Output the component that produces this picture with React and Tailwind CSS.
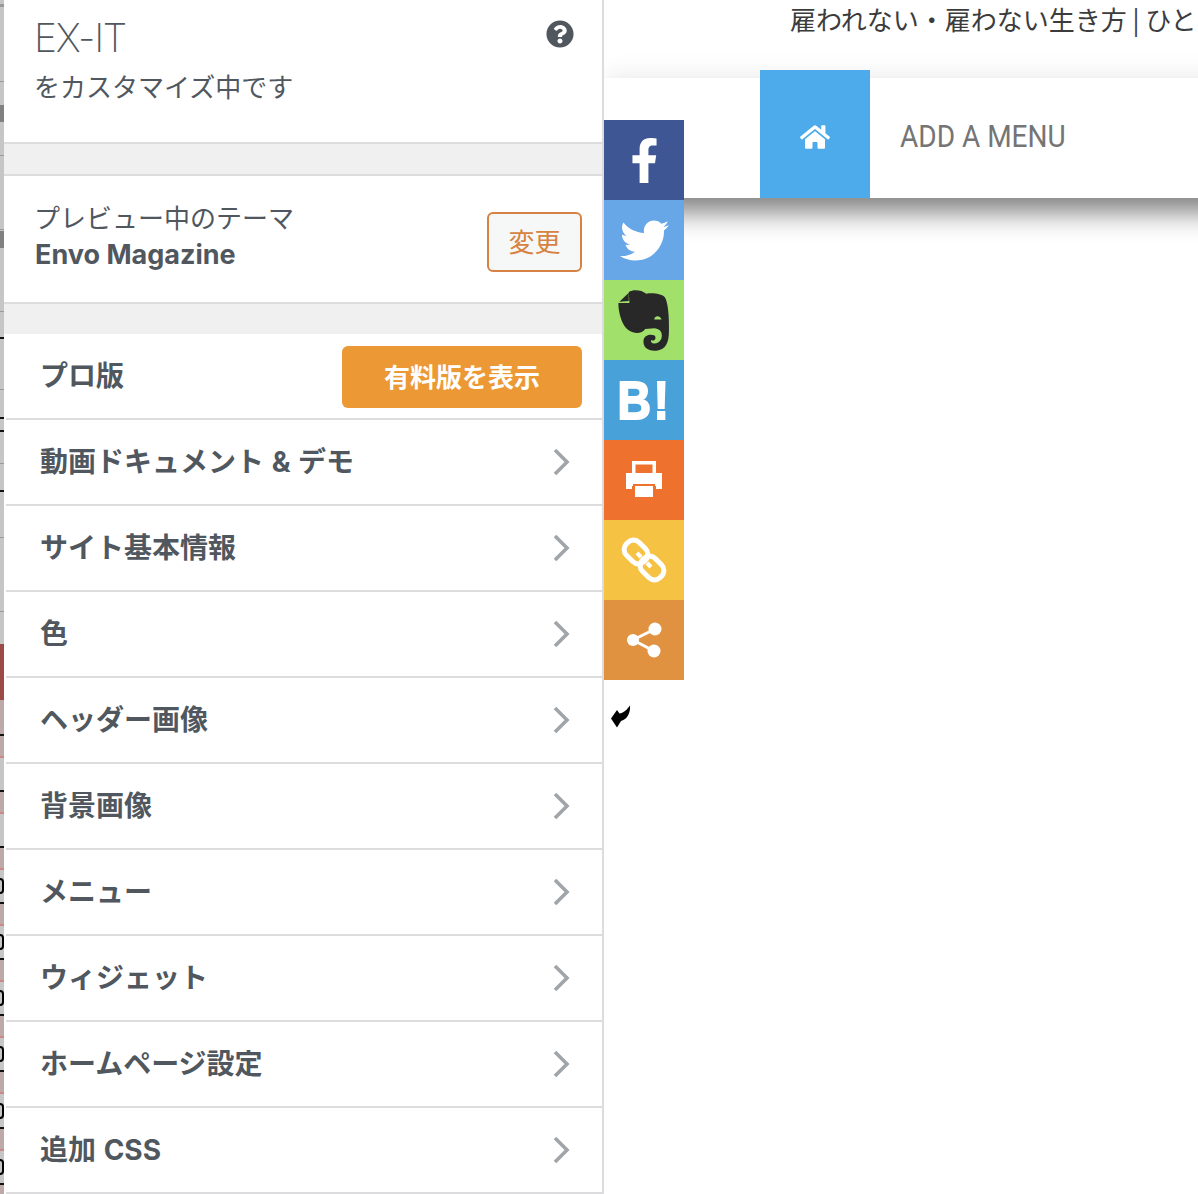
import React from "react";
import { FaFacebookF, FaTwitter, FaHome, FaQuestionCircle } from "react-icons/fa";

const jp = { fontFamily: '"Noto Sans CJK JP", sans-serif' };

function Chevron() {
  return (
    <svg width="18" height="28" viewBox="0 0 18 28" className="shrink-0">
      <polyline points="3,2 15,14 3,26" fill="none" stroke="#a0a5aa" strokeWidth="3.6" />
    </svg>
  );
}

function Row({ label }) {
  return (
    <div className="h-[86px] border-b-2 border-[#dcdcde] flex items-center justify-between pl-[34px] pr-8 ml-[2px]">
      <span className="text-[28px] font-bold text-[#50575e] leading-none [word-spacing:1px] font-['Inter','Noto_Sans_CJK_JP',sans-serif]">{label}</span>
      <Chevron />
    </div>
  );
}

const rows = ["動画ドキュメント & デモ", "サイト基本情報", "色", "ヘッダー画像", "背景画像", "メニュー", "ウィジェット", "ホームページ設定", "追加 CSS"];

function ElephantIcon() {
  return (
    <svg width="57" height="67" viewBox="50 20 170 200">
      <path
        fill="#282828"
        d="M88 35C100 27 125 27 140 40C160 37 185 40 195 50C205 62 209 110 208 150C208 185 200 207 170 210C145 212 130 200 132 180C133 165 150 158 165 165C172 172 165 185 155 178C150 190 175 195 185 175C190 160 185 145 165 143L137 145C130 156 115 160 100 155C80 150 70 130 65 115C60 100 57 85 57 68L90 68Z"
      />
      <path fill="#282828" d="M60 64L88 37V62Z" />
      <path fill="#a2e06c" d="M164 117C166 105 180 104 186 117Z" />
    </svg>
  );
}

function PrintIcon() {
  return (
    <svg width="40" height="40" viewBox="0 0 40 40">
      <path fillRule="evenodd" d="M8 1H32V13H38V29H32V26H8V29H2V13H8ZM11.5 4.5V13H28.5V4.5Z" fill="#fff" />
      <rect x="10" y="25" width="20" height="13" fill="#fff" stroke="#ee722e" strokeWidth="2" />
    </svg>
  );
}

function LinkIcon() {
  return (
    <svg width="46" height="46" viewBox="0 0 46 46" fill="none" stroke="#fff">
      <rect x="2.5" y="6" width="25" height="18" rx="8" strokeWidth="5" transform="rotate(45 15 15)" />
      <rect x="18.5" y="22" width="25" height="18" rx="8" strokeWidth="5" transform="rotate(45 31 31)" />
      <path d="M16 16L20 20M26 26L30 30" strokeWidth="4" />
    </svg>
  );
}

function ShareIcon() {
  return (
    <svg width="36" height="36" viewBox="0 0 36 36" fill="#fff">
      <path d="M29 7L7 18L28 29" fill="none" stroke="#fff" strokeWidth="3" />
      <circle cx="29" cy="7" r="6.5" />
      <circle cx="7" cy="18" r="6" />
      <circle cx="28" cy="29" r="6.5" />
    </svg>
  );
}

const shares = [
  ["bg-[#3f5695]", <FaFacebookF size={45} color="#fff" />],
  ["bg-[#67a7e8]", <FaTwitter size={49} color="#fff" />],
  ["bg-[#a2e06c]", <ElephantIcon />],
  ["bg-[#49a1da]", <span className="text-[54px] font-bold text-white leading-none tracking-[3px] scale-x-[0.86] [-webkit-text-stroke:2px_white] font-['Liberation_Sans',sans-serif]">B!</span>],
  ["bg-[#ee722e]", <PrintIcon />],
  ["bg-[#f6c244]", <LinkIcon />],
  ["bg-[#e09240]", <ShareIcon />],
];

const GRAY = "#c6c6c6";
const PINK = "#bda9a7";
const LINE = "#9a9a9a";

function stripSegments() {
  const segs = [];
  let y = 0;
  const fill = (to, color) => {
    if (to > y) segs.push({ h: to - y, color });
    y = Math.max(y, to);
  };
  const mark = (at, h, color) => {
    fill(at, GRAY);
    segs.push({ h, color });
    y = at + h;
  };
  [[4, 3, LINE], [81, 1, LINE], [105, 17, "#808080"], [155, 1, LINE], [229, 1, LINE], [231, 17, "#808080"], [311, 1, LINE], [337, 2, "#111"], [389, 1, LINE], [417, 2, "#111"], [430, 2, "#111"], [463, 1, LINE], [490, 2, "#111"], [537, 1, LINE], [611, 1, LINE]].forEach(([a, h, c]) => mark(a, h, c));
  fill(644, GRAY);
  segs.push({ h: 56, color: "#9c4a45" });
  y = 700;
  fill(734, PINK);
  const ticks = [734, 790, 846, 902, 958, 1014, 1070, 1127, 1183];
  ticks.forEach((t, i) => {
    fill(t, i === 0 ? PINK : GRAY);
    segs.push({ h: 2, color: "#111" });
    y = t + 2;
    const next = ticks[i + 1];
    fill(t + 22, PINK);
    segs.push({ h: 2, color: "#c98a86" });
    y = t + 24;
    if (next && next >= 902) {
      fill(next - 24, GRAY);
      segs.push({ h: 16, color: GRAY, glyph: true });
      y = next - 8;
    }
  });
  fill(1194, GRAY);
  return segs;
}

export default function App() {
  return (
    <div className="w-[1198px] h-[1194px] overflow-hidden flex bg-white relative" style={jp}>
      <div className="w-[4px] shrink-0 h-[1194px] overflow-hidden">
        {stripSegments().map((s, i) => (
          <div key={i} style={{ height: s.h, backgroundColor: s.color }}>
            {s.glyph && <div className="w-[4px] h-[16px] border-[2px] border-l-0 border-black rounded-r-full"></div>}
          </div>
        ))}
      </div>
      <aside className="relative z-10 w-[600px] shrink-0 bg-white border-r-2 border-[#dcdcde] h-[1194px]">
        <div className="h-[142px] pl-[31px] pr-[28px] flex justify-between">
          <div>
            <div className="pt-[15px] -ml-[1px] text-[39px] leading-[46px] font-extralight text-[#50575e] tracking-[-1.3px] font-['Inter',sans-serif]">EX-IT</div>
            <div className="mt-[5px] -ml-[1px] text-[26px] leading-[40px] text-[#50575e]">をカスタマイズ中です</div>
          </div>
          <FaQuestionCircle size={28} color="#50575e" className="mt-[20px]" />
        </div>
        <div className="h-[34px] bg-[#f0f0f1] border-y-2 border-[#dcdcde]"></div>
        <div className="h-[126px] pl-[31px] pr-[20px] flex items-center justify-between">
          <div className="text-[#50575e] mb-[5px]">
            <div className="-ml-[1px] text-[26px] leading-[36px]">プレビュー中のテーマ</div>
            <div className="mt-[1px] text-[27px] leading-[38px] font-bold font-['Inter',sans-serif]">Envo Magazine</div>
          </div>
          <div className="w-[95px] h-[60px] mt-[6px] pb-[3px] rounded-[6px] border-2 border-[#d68242] bg-[#f6f7f7] flex items-center justify-center text-[26px] text-[#d68242]">変更</div>
        </div>
        <div className="h-[32px] bg-[#f0f0f1] border-t-2 border-[#dcdcde]"></div>
        <div className="h-[86px] border-b-2 border-[#dcdcde] flex items-center justify-between pl-[34px] pr-[20px] ml-[2px]">
          <span className="mb-[4px] text-[28px] font-bold text-[#50575e] leading-none">プロ版</span>
          <div className="mt-[2px] pb-[3px] w-[240px] h-[62px] rounded-[6px] bg-[#ec9835] flex items-center justify-center text-[26px] font-bold text-white">有料版を表示</div>
        </div>
        {rows.map((r) => (
          <Row key={r} label={r} />
        ))}
      </aside>
      <main className="flex-1 min-w-0 overflow-hidden">
        <div className="h-[78px] pl-[186px] whitespace-nowrap text-[26px] leading-[38px] text-[#3c3c3c]">雇われない・雇わない生き方 | ひと</div>
        <nav className="h-[120px] w-[700px] bg-white flex items-start pl-[156px] shadow-[0_20px_25px_-5px_rgba(0,0,0,0.47),0_-4px_24px_rgba(0,0,0,0.07)]">
          <div className="w-[110px] h-[128px] -mt-2 bg-[#4dabec] flex items-center justify-center">
            <FaHome size={30} color="#fff" className="mt-[6px]" />
          </div>
          <div className="ml-[30px] h-[116px] flex items-center text-[32px] text-[#757575] whitespace-nowrap origin-left scale-x-[0.875] font-['Roboto',sans-serif]">ADD A MENU</div>
        </nav>
      </main>
      <div className="absolute z-20 left-[604px] top-[120px] w-[80px]">
        {shares.map(([bg, icon], i) => (
          <div key={i} className={`h-[80px] flex items-center justify-center ${bg}`}>{icon}</div>
        ))}
      </div>
      <svg className="absolute z-20 left-[610px] top-[704px]" width="22" height="24" viewBox="0 0 22 24">
        <path d="M1 14.5L7 6L9.5 9.5C13 9 17 6 20 1.5C20.5 8 18 15 11 17L7 23.5Z" fill="#000" />
      </svg>
    </div>
  );
}
